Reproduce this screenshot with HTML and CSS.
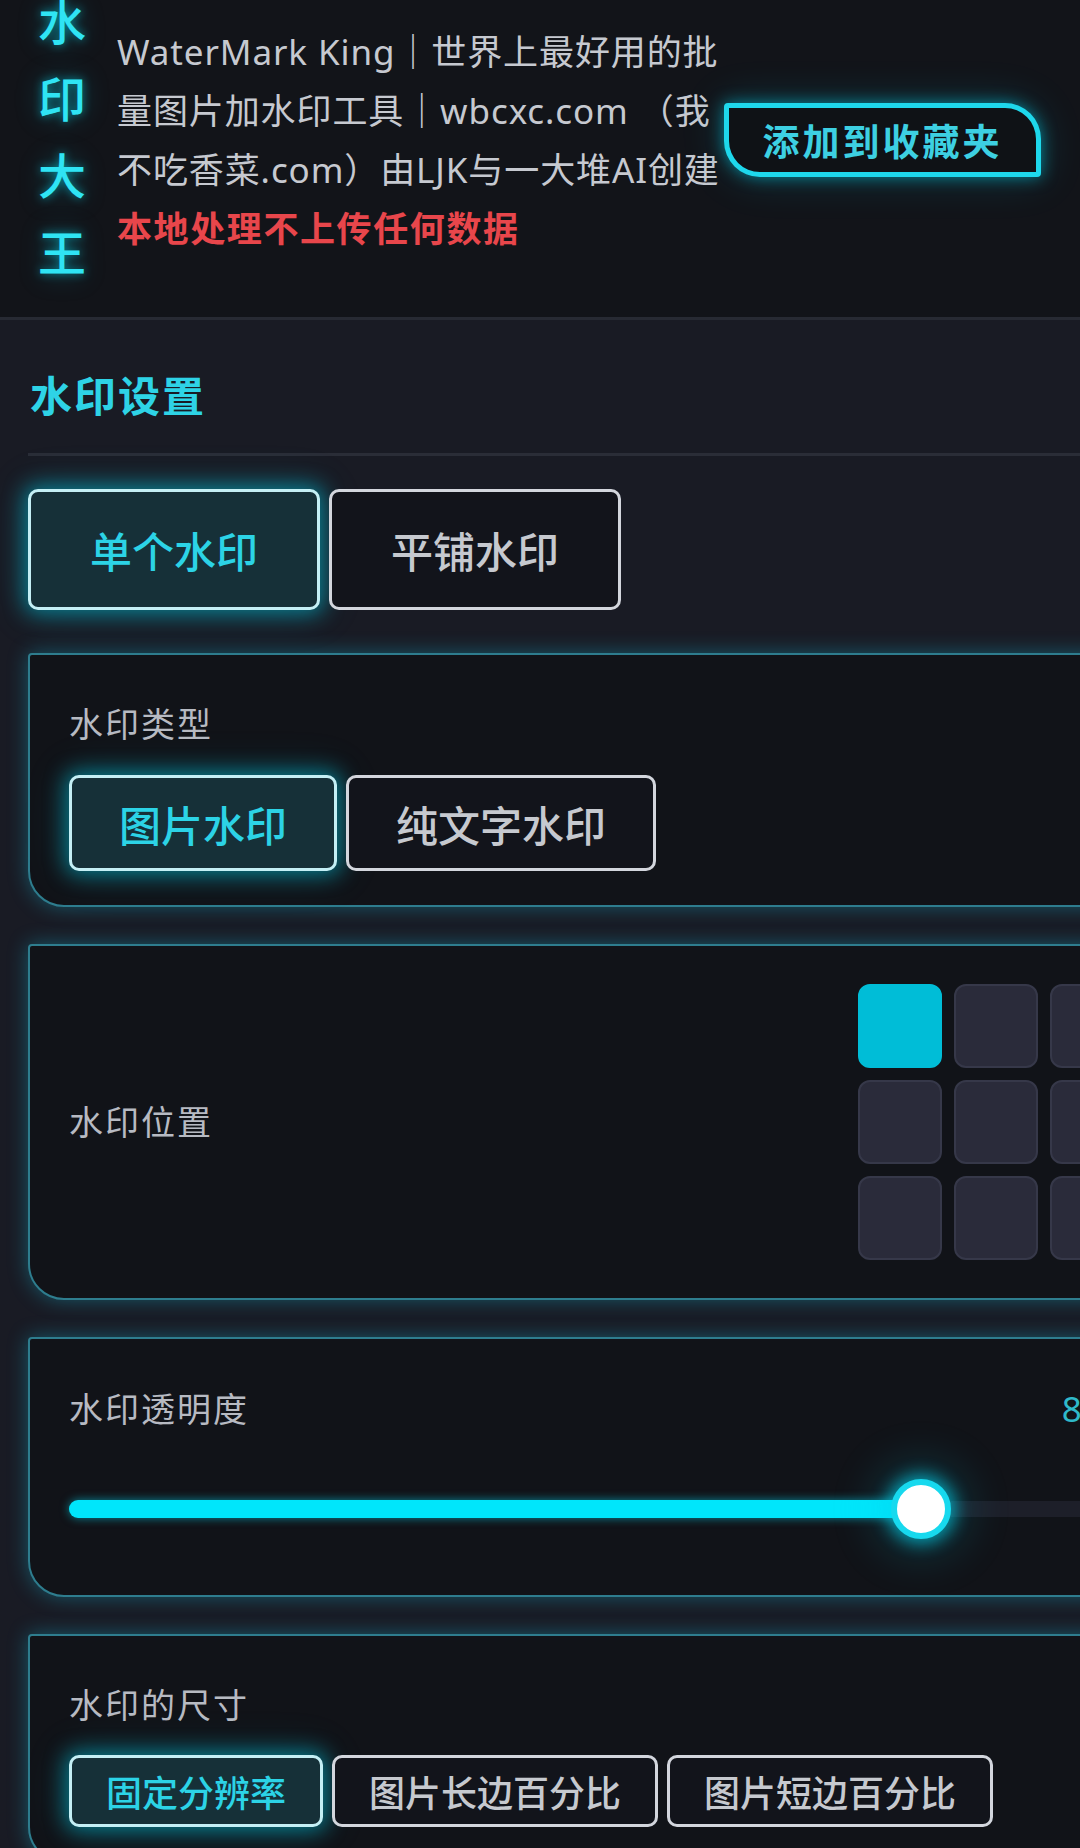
FILE: index.html
```html
<!DOCTYPE html>
<html lang="zh-CN">
<head>
<meta charset="utf-8">
<title>水印大王 - WaterMark King</title>
<link rel="stylesheet" href="styles.css">
</head>
<body>
<header class="site-header">
  <div class="brand"><span>水</span><span>印</span><span>大</span><span>王</span></div>
  <div class="header-row">
    <div class="intro">
      <p class="desc">WaterMark King｜世界上最好用的批<br>量图片加水印工具｜wbcxc.com （我<br>不吃香菜.com）由LJK与一大堆AI创建</p>
      <p class="notice">本地处理不上传任何数据</p>
    </div>
    <button class="fav-btn">添加到收藏夹</button>
  </div>
</header>

<main class="panel">
  <h2 class="panel-title">水印设置</h2>

  <div class="tabs">
    <button class="tab is-active">单个水印</button>
    <button class="tab">平铺水印</button>
  </div>

  <section class="card">
    <div class="card-label">水印类型</div>
    <div class="seg">
      <button class="seg-btn is-active">图片水印</button>
      <button class="seg-btn">纯文字水印</button>
    </div>
  </section>

  <section class="card card-inline">
    <div class="card-label">水印位置</div>
    <div class="pos-grid">
      <span class="pos-cell is-active"></span>
      <span class="pos-cell"></span>
      <span class="pos-cell"></span>
      <span class="pos-cell"></span>
      <span class="pos-cell"></span>
      <span class="pos-cell"></span>
      <span class="pos-cell"></span>
      <span class="pos-cell"></span>
      <span class="pos-cell"></span>
    </div>
  </section>

  <section class="card card-slider">
    <div class="card-head">
      <span class="card-label">水印透明度</span>
      <span class="card-value">80%</span>
    </div>
    <div class="slider">
      <div class="slider-track"></div>
      <div class="slider-fill" style="width:80%"></div>
      <div class="slider-thumb" style="left:80%"></div>
    </div>
  </section>

  <section class="card">
    <div class="card-label">水印的尺寸</div>
    <div class="seg seg-sm">
      <button class="seg-btn is-active">固定分辨率</button>
      <button class="seg-btn">图片长边百分比</button>
      <button class="seg-btn">图片短边百分比</button>
    </div>
  </section>
</main>
</body>
</html>
```

FILE: styles.css
```css
* {
  box-sizing: border-box;
}

html, body {
  margin: 0;
  padding: 0;
}

body {
  width: 1080px;
  height: 1848px;
  overflow: hidden;
  background: #191b24;
  color: #c6c9d0;
  font-family: "Noto Sans", "Noto Sans CJK SC", sans-serif;
}

button {
  font-family: inherit;
  cursor: pointer;
}

/* ---------- header ---------- */
.site-header {
  display: flex;
  align-items: flex-start;
  padding: 0 0 28px 38px;
  background: #121419;
  border-bottom: 3px solid #272a33;
}

.brand {
  display: flex;
  flex-direction: column;
  width: 48px;
  margin-top: -19px;
  font-family: "Noto Sans CJK SC", sans-serif;
  font-size: 48px;
  font-weight: 500;
  line-height: 77px;
  color: #2fe4f4;
  text-align: center;
  text-shadow: 0 0 10px rgba(0, 225, 245, 0.6), 0 0 26px rgba(0, 200, 230, 0.35);
}

.header-row {
  display: flex;
  align-items: center;
  margin-top: 22px;
  margin-left: 31px;
}

.intro {
  width: 604px;
  flex: none;
  white-space: nowrap;
}

.desc,
.notice {
  margin: 0;
  font-size: 35px;
  line-height: 59px;
}

.desc {
  color: #c6c9d0;
  letter-spacing: 0.9px;
}

.notice {
  color: #e8464b;
  font-weight: 700;
  letter-spacing: 1.6px;
}

.fav-btn {
  flex: none;
  width: 317px;
  height: 74px;
  margin-left: 3px;
  padding: 0;
  background: #0f1216;
  border: 5px solid #1ed8ec;
  border-radius: 4px 36px 4px 36px;
  color: #3dd0e2;
  font-size: 37px;
  font-weight: 700;
  letter-spacing: 3px;
  box-shadow: 0 0 16px rgba(0, 215, 240, 0.55), 0 0 44px rgba(0, 190, 225, 0.2);
}

/* ---------- panel ---------- */
.panel {
  padding: 48px 0 0 28px;
}

.panel-title {
  margin: 0;
  padding: 0 0 29px 2px;
  border-bottom: 3px solid #2a2d37;
  font-size: 42px;
  line-height: 56px;
  font-weight: 700;
  letter-spacing: 2px;
  color: #2ed3e6;
}

.tabs {
  display: flex;
  gap: 9px;
  margin-top: 33px;
}

.tab,
.seg-btn {
  flex: none;
  border: 3px solid #d3d6dd;
  border-radius: 10px;
  background: #12141b;
  color: #c6c9cf;
  font-weight: 500;
  white-space: nowrap;
}

.tab {
  height: 121px;
  padding: 0 59px;
  font-size: 42px;
}

.tab.is-active,
.seg-btn.is-active {
  background: #163038;
  border-color: #c4eff5;
  color: #2cd3e6;
  box-shadow: 0 0 20px 4px rgba(0, 200, 225, 0.5), 0 0 44px rgba(0, 180, 210, 0.22);
}

/* ---------- cards ---------- */
.card {
  width: 1147px;
  margin-top: 37px;
  padding: 49px 39px 34px 39px;
  background: #111318;
  border: 2px solid #2e7d8e;
  border-radius: 4px 36px 4px 36px;
  box-shadow: 0 0 20px rgba(25, 175, 205, 0.42);
}

.tabs + .card {
  margin-top: 43px;
}

.card-label {
  display: block;
  font-size: 34px;
  line-height: 40px;
  letter-spacing: 2px;
  color: #b7bac2;
}

.seg {
  display: flex;
  gap: 9px;
  margin-top: 31px;
}

.seg-btn {
  height: 96px;
  padding: 0 47px;
  font-size: 42px;
}

.seg-sm {
  margin-top: 30px;
}

.seg-sm .seg-btn {
  height: 72px;
  padding: 0 34px;
  font-size: 36px;
}

/* position card */
.card-inline {
  display: flex;
  align-items: center;
  justify-content: space-between;
  padding: 38px 39px;
}

.pos-grid {
  display: grid;
  grid-template-columns: repeat(3, 84px);
  grid-auto-rows: 84px;
  gap: 12px;
}

.pos-cell {
  display: block;
  background: #2a2b3a;
  border: 2px solid #363849;
  border-radius: 12px;
}

.pos-cell.is-active {
  background: #00bdd7;
  border-color: #00bdd7;
}

/* slider card */
.card-slider {
  padding: 50px 39px 56px 39px;
}

.card-head {
  display: flex;
  justify-content: space-between;
  align-items: center;
}

.card-value {
  font-size: 35px;
  line-height: 40px;
  letter-spacing: 1px;
  color: #2fb9ca;
}

.slider {
  position: relative;
  height: 60px;
  margin-top: 50px;
}

.slider-track {
  position: absolute;
  left: 0;
  right: 0;
  top: 22px;
  height: 16px;
  border-radius: 8px;
  background: #1d1f29;
}

.slider-fill {
  position: absolute;
  left: 0;
  top: 21px;
  height: 18px;
  border-radius: 9px;
  background: #00e6fb;
  box-shadow: 0 0 10px rgba(0, 230, 255, 0.55);
}

.slider-thumb {
  position: absolute;
  top: 0;
  width: 60px;
  height: 60px;
  margin-left: -30px;
  border-radius: 50%;
  background: #ffffff;
  border: 6px solid #17d9ee;
  box-shadow: 0 0 16px 5px rgba(0, 220, 245, 0.6), 0 0 48px 14px rgba(0, 200, 230, 0.22);
}
```
